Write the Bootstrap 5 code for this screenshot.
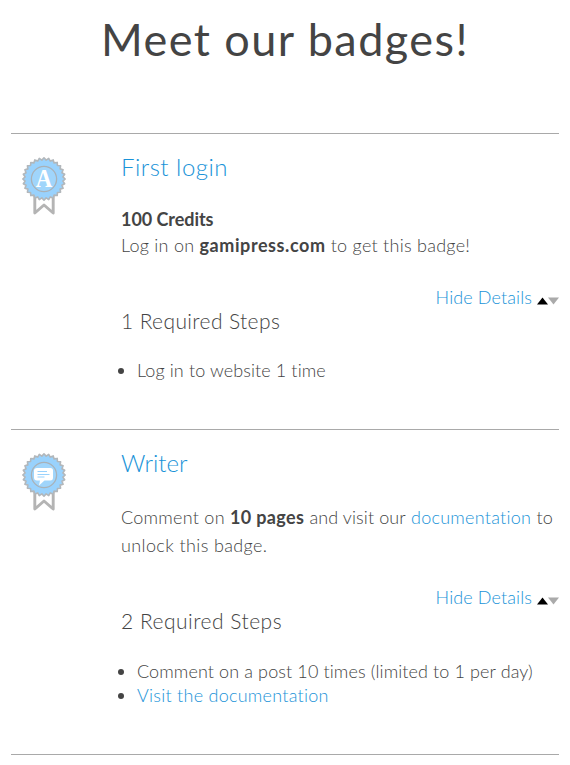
<!DOCTYPE html>
<html lang="en">
<head>
<meta charset="utf-8">
<meta name="viewport" content="width=device-width, initial-scale=1">
<title>Meet our badges!</title>
<link href="https://cdn.jsdelivr.net/npm/bootstrap@5.3.0/dist/css/bootstrap.min.css" rel="stylesheet">
<style>
  body { font-family: Lato, "Open Sans", sans-serif; font-size: 18px; font-weight: 300; color: #444; line-height: 28px; }
  main { padding: 10px 11px 0; }
  .page-title { font-size: 45px; font-weight: 400; line-height: 59px; letter-spacing: 1.45px; margin-bottom: 64px; }
  .badge-list { border-top: 1px solid #a9a9a9; }
  .badge-item { border-bottom: 1px solid #a9a9a9; }
  .badge-item:first-child { height: 296px; }
  .badge-item:last-child { height: 325px; }
  .badge-thumb { width: 110px; padding: 22px 0 0 9px; }
  .badge-name { font-size: 24px; font-weight: 300; line-height: 30px; padding-top: 18px; }
  a, .badge-name a { color: #1a93d8; text-decoration: none; }
  b { font-weight: 700; letter-spacing: -.05px; }
  b.site { letter-spacing: .57px; }
  b.pages { letter-spacing: .35px; }
  .t0 { letter-spacing: .11px; }
  .t1 { letter-spacing: .26px; }
  .t2 { letter-spacing: .38px; }
  .t3 { letter-spacing: .5px; }
  .summary { line-height: 26px; margin: 24px 0 27px; }
  .summary-wide { line-height: 28px; margin: 25px 0 26px; }
  .toggle-row { line-height: 24px; }
  .toggle-row svg { margin: 8px 0 0 5px; }
  .steps-title { font-size: 21px; font-weight: 300; line-height: 24px; }
  .step-list { list-style: disc; line-height: 24px; padding-left: 16px; margin: 25px 0 0; }
  .badge-item:last-child .step-list { margin-top: 26px; }
</style>
</head>
<body class="bg-white">
<svg class="d-none" xmlns="http://www.w3.org/2000/svg">
  <symbol id="rosette" viewBox="0 0 48 62">
    <path d="M14.8 39V57L24 49L33.2 57V39" fill="#fff" stroke="#b4b4b4" stroke-width="2.9" stroke-linejoin="round"/>
    <path class="rim" fill="#99d2fd" stroke="#b2b7bb" stroke-width="1.6" stroke-linejoin="round"/>
    <circle cx="24" cy="23" r="12.6" fill="#a0d5fb" stroke="#a9b1b7" stroke-width="1.3"/>
  </symbol>
</svg>
<main>
  <h1 class="page-title text-center">Meet our badges!</h1>
  <ul class="badge-list list-unstyled mb-0">
    <li class="badge-item d-flex">
      <div class="badge-thumb flex-shrink-0">
        <svg class="d-block" width="48" height="62" viewBox="0 0 48 62" role="img" aria-label="First login badge">
          <use href="#rosette"/>
          <text x="24" y="31" text-anchor="middle" font-family="Liberation Serif, serif" font-weight="700" font-size="25" textLength="16.5" lengthAdjust="spacingAndGlyphs" fill="#fff">A</text>
        </svg>
      </div>
      <div class="flex-grow-1">
        <h2 class="badge-name mb-0 t3"><a href="#">First login</a></h2>
        <p class="summary"><b>100 Credits</b><br><span class="t1">Log in on <b class="site">gamipress.com</b> to get this badge!</span></p>
        <div class="toggle-row d-flex justify-content-end align-items-center">
          <a href="#" class="t0">Hide Details</a>
          <svg width="22" height="8" viewBox="0 0 22 8" aria-hidden="true"><path d="M0 7.5L5.5 .5L11 7.5Z" fill="#000"/><path d="M11 .5H22L16.5 7.5Z" fill="#aaa"/></svg>
        </div>
        <h3 class="steps-title mb-0 t2">1 Required Steps</h3>
        <ul class="step-list"><li class="t0">Log in to website 1 time</li></ul>
      </div>
    </li>
    <li class="badge-item d-flex">
      <div class="badge-thumb flex-shrink-0">
        <svg class="d-block" width="48" height="62" viewBox="0 0 48 62" role="img" aria-label="Writer badge">
          <use href="#rosette"/>
          <path d="M17 16H30.5Q33 16 33 18.5V25.5Q33 28.5 30.5 28.5H24.5L19 33.5L20 28.5H17Q14 28.5 14 25.5V18.5Q14 16 17 16Z" fill="#fff"/>
          <path d="M17.5 19.5H27M17.5 22.5H29.5M17.5 25H24.5" stroke="#99d2fd" stroke-width="1"/>
        </svg>
      </div>
      <div class="flex-grow-1">
        <h2 class="badge-name mb-0"><a href="#">Writer</a></h2>
        <p class="summary summary-wide t1">Comment on <b class="pages">10 pages</b> <span class="t0">and visit our</span> <a href="#">documentation</a> to<br><span class="t2">unlock this badge.</span></p>
        <div class="toggle-row d-flex justify-content-end align-items-center">
          <a href="#" class="t0">Hide Details</a>
          <svg width="22" height="8" viewBox="0 0 22 8" aria-hidden="true"><path d="M0 7.5L5.5 .5L11 7.5Z" fill="#000"/><path d="M11 .5H22L16.5 7.5Z" fill="#aaa"/></svg>
        </div>
        <h3 class="steps-title mb-0 t3">2 Required Steps</h3>
        <ul class="step-list"><li class="t0">Comment on a post 10 times (limited to 1 per day)</li><li><a href="#" class="t1">Visit the documentation</a></li></ul>
      </div>
    </li>
  </ul>
</main>
<script src="https://cdn.jsdelivr.net/npm/bootstrap@5.3.0/dist/js/bootstrap.bundle.min.js"></script>
<script>
  // Toothed edge of the rosette: 28 points around the centre.
  const points = Array.from({ length: 56 }, (_, i) => {
    const a = Math.PI * i / 28, r = i % 2 ? 19 : 21.2;
    return (24 + r * Math.sin(a)).toFixed(2) + ' ' + (23 - r * Math.cos(a)).toFixed(2);
  });
  document.querySelector('.rim').setAttribute('d', 'M' + points.join('L') + 'Z');
</script>
</body>
</html>
